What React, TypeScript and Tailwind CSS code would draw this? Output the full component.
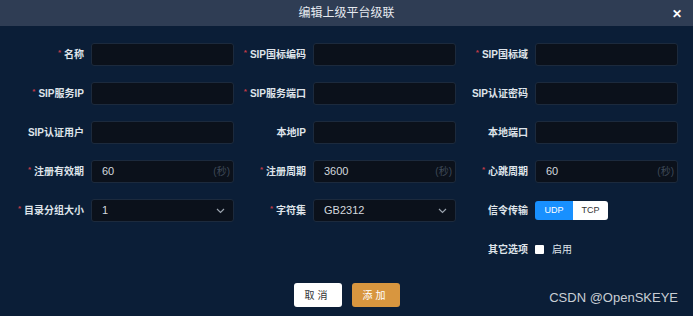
import * as React from "react"

const font = { fontFamily: '"Liberation Sans", "Noto Sans CJK SC", sans-serif' }

function Label({ text, required }: { text: string; required?: boolean }) {
  return (
    <div className="w-[72px] shrink-0 flex justify-end items-center text-[10px] font-bold text-[#dfe4ea] whitespace-nowrap">
      {required && <span className="text-[#c23b48] text-[8px] mr-[3px] -mt-[4px]">*</span>}
      {text}
    </div>
  )
}

function Input({ value, suffix }: { value?: string; suffix?: string }) {
  return (
    <div className="w-[143px] h-[23px] ml-[7px] rounded-[3px] border border-[#1c2a3d] bg-[#0b111b] flex items-center px-[10px] text-[11px] text-[#d3d8de]">
      <span className="flex-1">{value}</span>
      {suffix && <span className="text-[#3f4a59] -mr-[7px] text-[10px]">{suffix}</span>}
    </div>
  )
}

function Select({ value }: { value: string }) {
  return (
    <div className="w-[143px] h-[23px] ml-[7px] rounded-[3px] border border-[#1c2a3d] bg-[#0b111b] flex items-center pl-[10px] pr-[8px] text-[11px] text-[#d3d8de]">
      <span className="flex-1">{value}</span>
      <svg width="9" height="6" viewBox="0 0 9 6" fill="none">
        <path d="M1 1l3.5 3.5L8 1" stroke="#9aa3ae" strokeWidth="1.2" />
      </svg>
    </div>
  )
}

function Field({ label, required, children }: { label: string; required?: boolean; children: React.ReactNode }) {
  return (
    <div className="flex items-center h-[23px]">
      <Label text={label} required={required} />
      {children}
    </div>
  )
}

export default function App() {
  return (
    <div className="relative w-[693px] h-[316px] bg-[#0b1e37] overflow-hidden" style={font}>
      <div className="h-[26px] bg-[#2f3d54] flex items-center justify-center relative">
        <span className="text-[12px] text-[#e6eaf0]">编辑上级平台级联</span>
        <span className="absolute right-[11px] top-[5px] text-[12px] font-bold text-white">✕</span>
      </div>

      <div className="pl-[12px] pt-[17px] grid grid-cols-[222px_222px_222px] gap-y-[16px]">
        <Field label="名称" required><Input /></Field>
        <Field label="SIP国标编码" required><Input /></Field>
        <Field label="SIP国标域" required><Input /></Field>

        <Field label="SIP服务IP" required><Input /></Field>
        <Field label="SIP服务端口" required><Input /></Field>
        <Field label="SIP认证密码"><Input /></Field>

        <Field label="SIP认证用户"><Input /></Field>
        <Field label="本地IP"><Input /></Field>
        <Field label="本地端口"><Input /></Field>

        <Field label="注册有效期" required><Input value="60" suffix="(秒)" /></Field>
        <Field label="注册周期" required><Input value="3600" suffix="(秒)" /></Field>
        <Field label="心跳周期" required><Input value="60" suffix="(秒)" /></Field>

        <Field label="目录分组大小" required><Select value="1" /></Field>
        <Field label="字符集" required><Select value="GB2312" /></Field>
        <Field label="信令传输">
          <div className="ml-[7px] flex h-[19px] rounded-[3px] overflow-hidden text-[9px]">
            <span className="w-[38px] bg-[#1890ff] text-white flex items-center justify-center">UDP</span>
            <span className="w-[35px] bg-white text-[#333] flex items-center justify-center">TCP</span>
          </div>
        </Field>

        <div className="col-start-3">
          <Field label="其它选项">
            <div className="ml-[7px] flex items-center text-[10px] text-[#dfe4ea]">
              <span className="w-[9px] h-[9px] bg-white rounded-[1px]" />
              <span className="ml-[8px]">启用</span>
            </div>
          </Field>
        </div>
      </div>

      <div className="mt-[22px] flex justify-center gap-[10px]">
        <button className="w-[48px] h-[24px] rounded-[3px] bg-white text-[#333] text-[10px] tracking-[3px]">取消</button>
        <button className="w-[48px] h-[24px] rounded-[3px] bg-[#d8963f] text-white text-[10px] tracking-[3px]">添加</button>
      </div>

      <span className="absolute right-[15px] bottom-[9px] text-[13px] text-[#c9ced5]">CSDN @OpenSKEYE</span>
    </div>
  )
}
